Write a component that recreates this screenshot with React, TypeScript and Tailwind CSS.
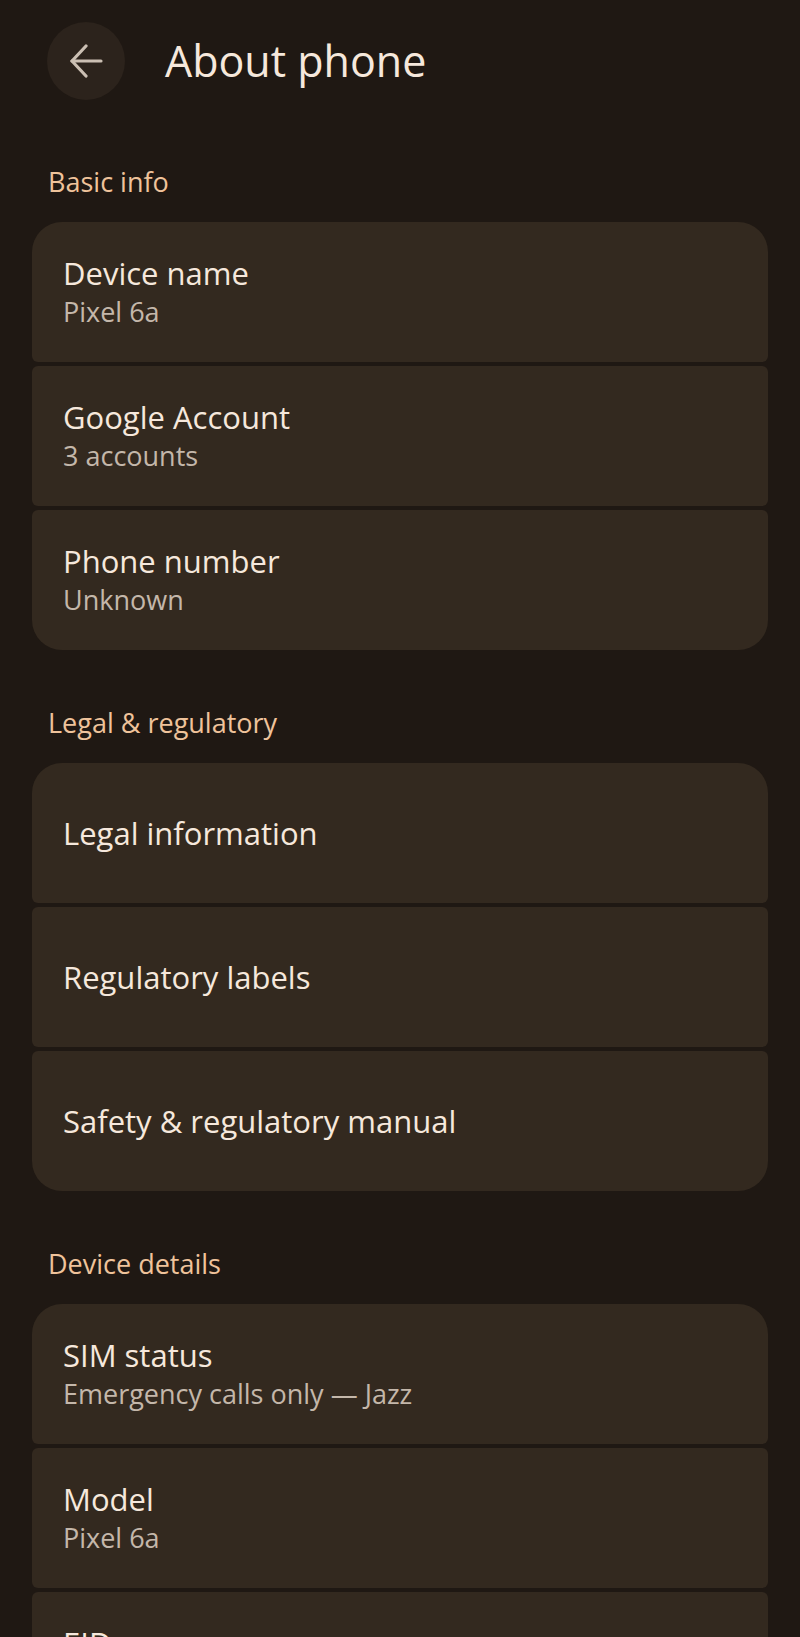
import { ReactNode } from "react";

type Item = { title: string; subtitle?: string };

const sections: { label: string; items: Item[]; open?: boolean }[] = [
  {
    label: "Basic info",
    items: [
      { title: "Device name", subtitle: "Pixel 6a" },
      { title: "Google Account", subtitle: "3 accounts" },
      { title: "Phone number", subtitle: "Unknown" },
    ],
  },
  {
    label: "Legal & regulatory",
    items: [
      { title: "Legal information" },
      { title: "Regulatory labels" },
      { title: "Safety & regulatory manual" },
    ],
  },
  {
    label: "Device details",
    open: true,
    items: [
      { title: "SIM status", subtitle: "Emergency calls only — Jazz" },
      { title: "Model", subtitle: "Pixel 6a" },
      { title: "EID", subtitle: "\u00a0" },
    ],
  },
];

function Row({ item, first, last }: { item: Item; first: boolean; last: boolean }) {
  const radius = first
    ? "rounded-t-[30px] rounded-b-[6px]"
    : last
    ? "rounded-b-[30px] rounded-t-[6px]"
    : "rounded-[6px]";
  return (
    <div className={`h-[140px] shrink-0 bg-[#33291f] px-[31px] flex flex-col justify-center ${radius}`}>
      <div className="text-[31px] leading-[40px] font-medium text-[#f6e8dc]">{item.title}</div>
      {item.subtitle && (
        <div className="text-[27px] leading-[38px] text-[#c4b7aa]">{item.subtitle}</div>
      )}
    </div>
  );
}

function Section({ label, children }: { label: string; children: ReactNode }) {
  return (
    <section className="mb-[57px]">
      <h2 className="px-[48px] text-[27px] leading-[32px] text-[#efc39b] mb-[24px]">{label}</h2>
      <div className="mx-[32px] flex flex-col gap-[4px]">{children}</div>
    </section>
  );
}

export default function App() {
  return (
    <div
      className="w-[800px] h-[1637px] overflow-hidden bg-[#1f1813]"
      style={{ fontFamily: '"Open Sans", "Noto Sans", sans-serif' }}
    >
      <header className="flex items-center pt-[22px] pl-[47px] mb-[66px]">
        <button className="w-[78px] h-[78px] rounded-full bg-[#2c231c] flex items-center justify-center">
          <svg width="34" height="34" viewBox="0 0 34 34" fill="none" stroke="#cbbfb3" strokeWidth="3.2" strokeLinecap="round" strokeLinejoin="round">
            <path d="M32 17H3" />
            <path d="M17 2L3 17l14 15" />
          </svg>
        </button>
        <h1 className="ml-[40px] text-[43px] leading-[56px] text-[#f6e8dc]">About phone</h1>
      </header>

      {sections.map((s) => (
        <Section key={s.label} label={s.label}>
          {s.items.map((item, i) => (
            <Row key={item.title} item={item} first={i === 0} last={i === s.items.length - 1 && !s.open} />
          ))}
        </Section>
      ))}
    </div>
  );
}
